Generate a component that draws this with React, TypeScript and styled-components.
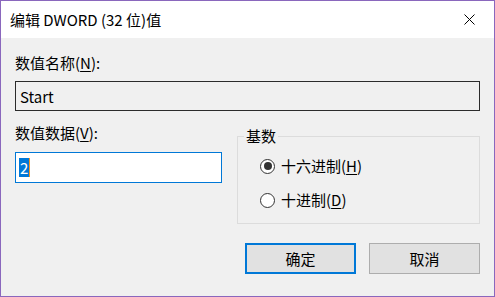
import React from 'react';
import styled, { createGlobalStyle } from 'styled-components';

const GlobalStyle = createGlobalStyle`
  html, body {
    margin: 0;
    padding: 0;
    background: #ffffff;
  }
  * {
    box-sizing: border-box;
  }
`;

const Window = styled.div`
  width: 495px;
  height: 297px;
  border: 1px solid #8a67bd;
  display: flex;
  flex-direction: column;
  background: #f0f0f0;
  font-family: "Noto Sans CJK SC", "Noto Sans", sans-serif;
  font-size: 15px;
  color: #000;
`;

const TitleBar = styled.div`
  height: 37px;
  background: #ffffff;
  display: flex;
  align-items: center;
  padding: 0 19px 0 9px;
  flex-shrink: 0;
`;

const Title = styled.div`
  flex: 1;
  line-height: 20px;
`;

const CloseIcon = styled.svg`
  width: 11px;
  height: 11px;
  display: block;
`;

const Body = styled.div`
  flex: 1;
  display: flex;
  flex-direction: column;
  padding: 15px 14px 0 14px;
`;

const Label = styled.div`
  line-height: 20px;
  height: 20px;
`;

const Key = styled.span`
  text-decoration: underline;
  text-underline-offset: 2px;
`;

const NameBox = styled.div`
  margin-top: 8px;
  height: 30px;
  border: 1px solid #2b2b2b;
  background: #f0f0f0;
  display: flex;
  align-items: center;
  padding-left: 4px;
`;

const MidRow = styled.div`
  display: flex;
  align-items: flex-start;
  justify-content: space-between;
`;

const DataColumn = styled.div`
  width: 207px;
  padding-top: 12px;
  display: flex;
  flex-direction: column;
  gap: 9px;
`;

const DataBox = styled.div`
  height: 31px;
  border: 1px solid #0078d7;
  background: #ffffff;
  display: flex;
  align-items: center;
  padding-left: 3px;
`;

const Selected = styled.span`
  background: #0078d7;
  color: #ffffff;
  line-height: 19px;
  padding: 0 1px;
`;

const Caret = styled.span`
  width: 1px;
  height: 19px;
  background: #f7941d;
`;

const GroupBox = styled.fieldset`
  width: 243px;
  margin: 15px 0 0 0;
  padding: 10px 6px 13px 6px;
  border: 1px solid #dcdcdc;
  display: flex;
  flex-direction: column;
  gap: 14px;
`;

const Legend = styled.legend`
  display: block;
  padding: 0 2px;
  height: 20px;
  line-height: 20px;
`;

const RadioRow = styled.label`
  display: flex;
  align-items: center;
  gap: 6px;
  height: 20px;
  line-height: 20px;
  padding-left: 16px;
`;

const RadioCircle = styled.span<{ $checked?: boolean }>`
  flex: none;
  width: 15px;
  height: 15px;
  border-radius: 50%;
  border: 1px solid #333333;
  background: #ffffff;
  display: flex;
  align-items: center;
  justify-content: center;

  &::after {
    content: '';
    width: 8px;
    height: 8px;
    border-radius: 50%;
    background: ${p => (p.$checked ? '#333333' : 'transparent')};
  }
`;

const ButtonRow = styled.div`
  margin-top: 19px;
  display: flex;
  justify-content: flex-end;
  gap: 13px;
`;

const Button = styled.button<{ $default?: boolean }>`
  width: 111px;
  height: 31px;
  background: #e1e1e1;
  border: ${p => (p.$default ? '2px solid #0078d7' : '1px solid #adadad')};
  font: inherit;
  color: #000;
  padding: 0;
  line-height: 20px;
`;

const App: React.FC = () => {
  return (
    <>
      <GlobalStyle />
      <Window>
        <TitleBar>
          <Title>编辑 DWORD (32 位)值</Title>
          <CloseIcon viewBox="0 0 11 11">
            <path d="M0.5 0.5 L10.5 10.5 M10.5 0.5 L0.5 10.5" stroke="#000" strokeWidth="1" fill="none" />
          </CloseIcon>
        </TitleBar>
        <Body>
          <Label>
            数值名称(<Key>N</Key>):
          </Label>
          <NameBox>Start</NameBox>
          <MidRow>
            <DataColumn>
              <Label>
                数值数据(<Key>V</Key>):
              </Label>
              <DataBox>
                <Selected>2</Selected>
                <Caret />
              </DataBox>
            </DataColumn>
            <GroupBox>
              <Legend>基数</Legend>
              <RadioRow>
                <RadioCircle $checked />
                <span>
                  十六进制(<Key>H</Key>)
                </span>
              </RadioRow>
              <RadioRow>
                <RadioCircle />
                <span>
                  十进制(<Key>D</Key>)
                </span>
              </RadioRow>
            </GroupBox>
          </MidRow>
          <ButtonRow>
            <Button $default>确定</Button>
            <Button>取消</Button>
          </ButtonRow>
        </Body>
      </Window>
    </>
  );
};

export default App;
